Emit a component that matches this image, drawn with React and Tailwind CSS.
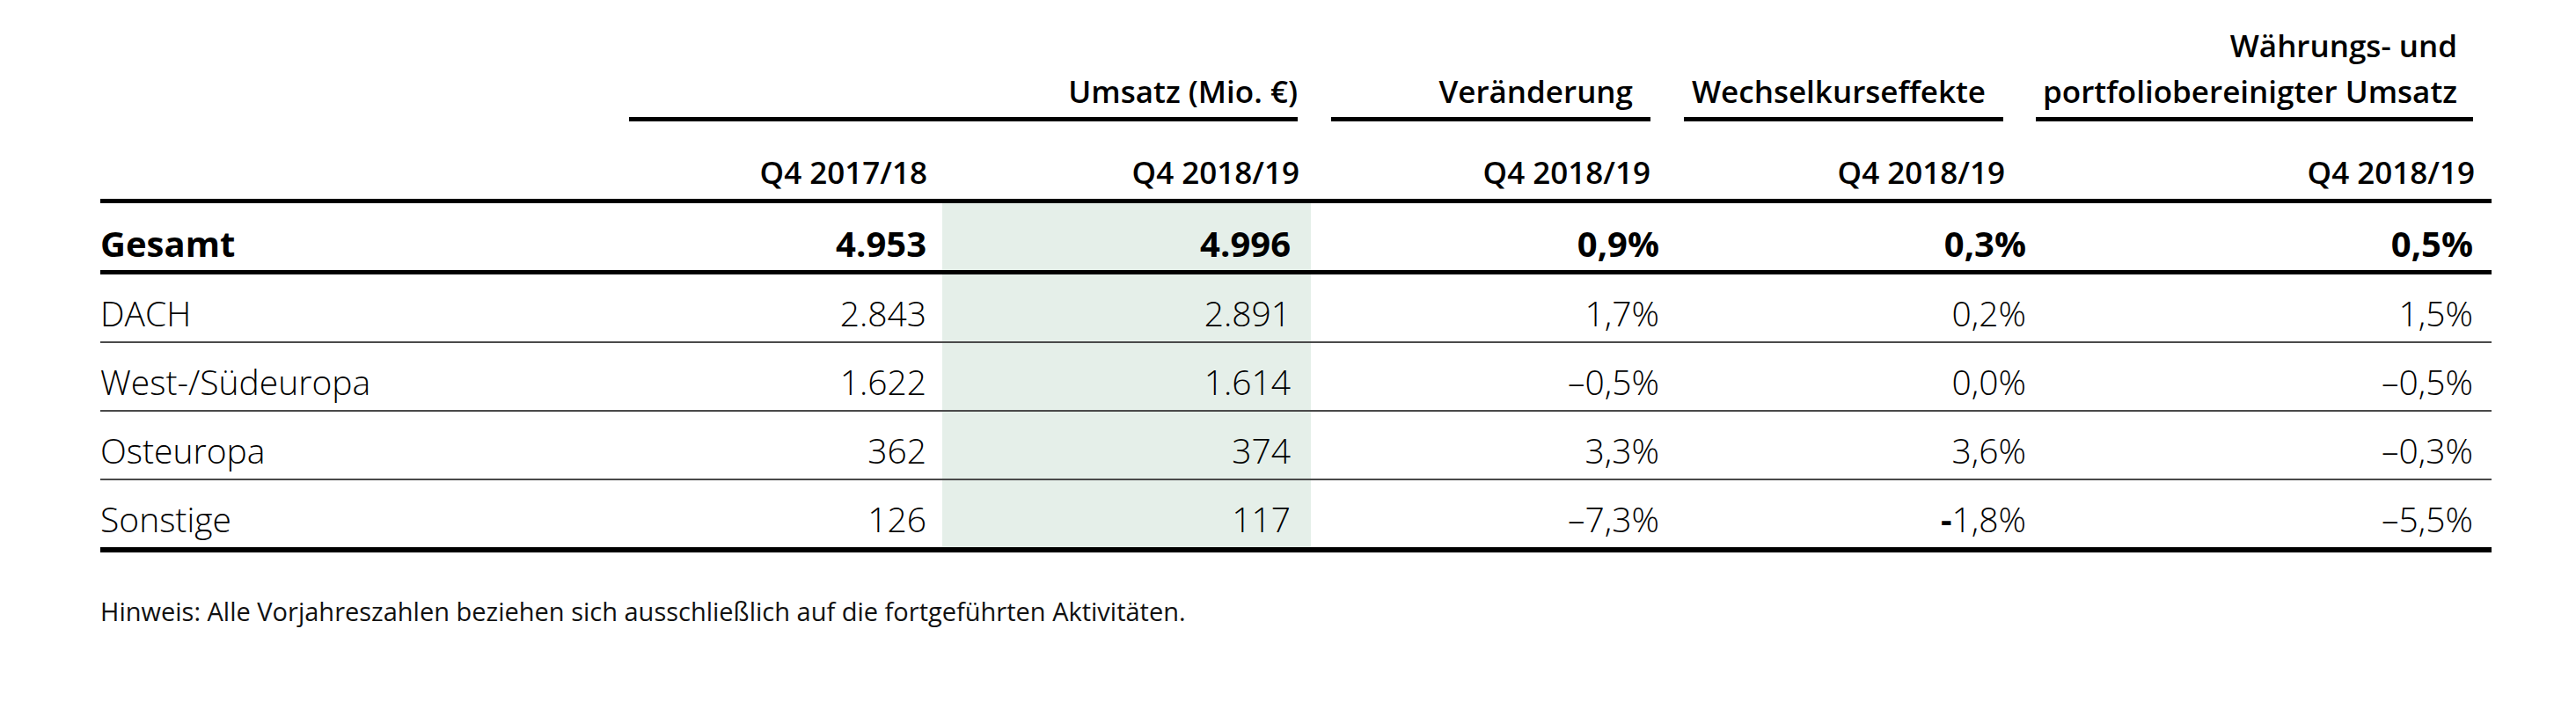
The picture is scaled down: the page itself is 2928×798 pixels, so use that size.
const cols = "grid grid-cols-[601px_356px_419px_417px_418px_507px]";

const rows = [
  { label: "DACH", v: ["2.843", "2.891", "1,7%", "0,2%", "1,5%"] },
  { label: "West-/Südeuropa", v: ["1.622", "1.614", "–0,5%", "0,0%", "–0,5%"] },
  { label: "Osteuropa", v: ["362", "374", "3,3%", "3,6%", "–0,3%"] },
  {
    label: "Sonstige",
    v: [
      "126",
      "117",
      "–7,3%",
      <>
        <span className="font-bold">-</span>1,8%
      </>,
      "–5,5%",
    ],
  },
];

const pads = ["pr-[18px]", "pr-[23px] bg-[#e5efe9]", "pr-[21px]", "pr-[22px]", "pr-[21px]"];

export default function App() {
  return (
    <div className="w-[2928px] h-[798px] bg-white text-black font-['Open_Sans',sans-serif] pl-[114px]">
      <div className="w-[2718px]">
        {/* group headers */}
        <div className={`${cols} items-end pt-[26px] text-[35px] leading-[52px] font-semibold`}>
          <div />
          <div className="col-span-2 mr-[15px] border-b-[5px] border-black pb-[3px] text-right">
            Umsatz (Mio. €)
          </div>
          <div className="ml-[23px] mr-[31px] border-b-[5px] border-black pb-[3px] pr-[20px] text-right">
            Veränderung
          </div>
          <div className="ml-[7px] mr-[48px] border-b-[5px] border-black pb-[3px] pr-[20px] text-right">
            Wechselkurseffekte
          </div>
          <div className="-ml-[11px] mr-[21px] border-b-[5px] border-black pb-[3px] pr-[18px] text-right">
            Währungs- und
            <br />
            portfoliobereinigter Umsatz
          </div>
        </div>

        {/* period row */}
        <div className={`${cols} pt-[32px] pb-[4px] text-[35px] leading-[52px] font-semibold border-b-[5px] border-black`}>
          <div />
          <div className="text-right pr-[17px]">Q4 2017/18</div>
          <div className="text-right pr-[13px]">Q4 2018/19</div>
          <div className="text-right pr-[31px]">Q4 2018/19</div>
          <div className="text-right pr-[46px]">Q4 2018/19</div>
          <div className="text-right pr-[19px]">Q4 2018/19</div>
        </div>

        {/* total */}
        <div className={`${cols} text-[40px] leading-[54px] border-b-[5px] border-black`}>
          <div className="pt-[19px] pb-[3px] font-bold">Gesamt</div>
          {["4.953", "4.996", "0,9%", "0,3%", "0,5%"].map((x, i) => (
            <div key={i} className={`pt-[19px] pb-[3px] text-right font-bold ${pads[i]}`}>
              {x}
            </div>
          ))}
        </div>

        {/* regions */}
        {rows.map((r, idx) => (
          <div
            key={r.label}
            className={`${cols} text-[39px] leading-[54px] ${
              idx === rows.length - 1 ? "border-b-[6px] border-black" : "border-b-2 border-[#4a4a4a]"
            }`}
          >
            <div className="pt-[17px] pb-[5px] font-light">{r.label}</div>
            {r.v.map((x, i) => (
              <div key={i} className={`pt-[17px] pb-[5px] text-right font-light ${pads[i]}`}>
                {x}
              </div>
            ))}
          </div>
        ))}

        <p className="mt-[47px] text-[29px] leading-[40px] text-[#111]">
          Hinweis: Alle Vorjahreszahlen beziehen sich ausschließlich auf die fortgeführten Aktivitäten.
        </p>
      </div>
    </div>
  );
}
